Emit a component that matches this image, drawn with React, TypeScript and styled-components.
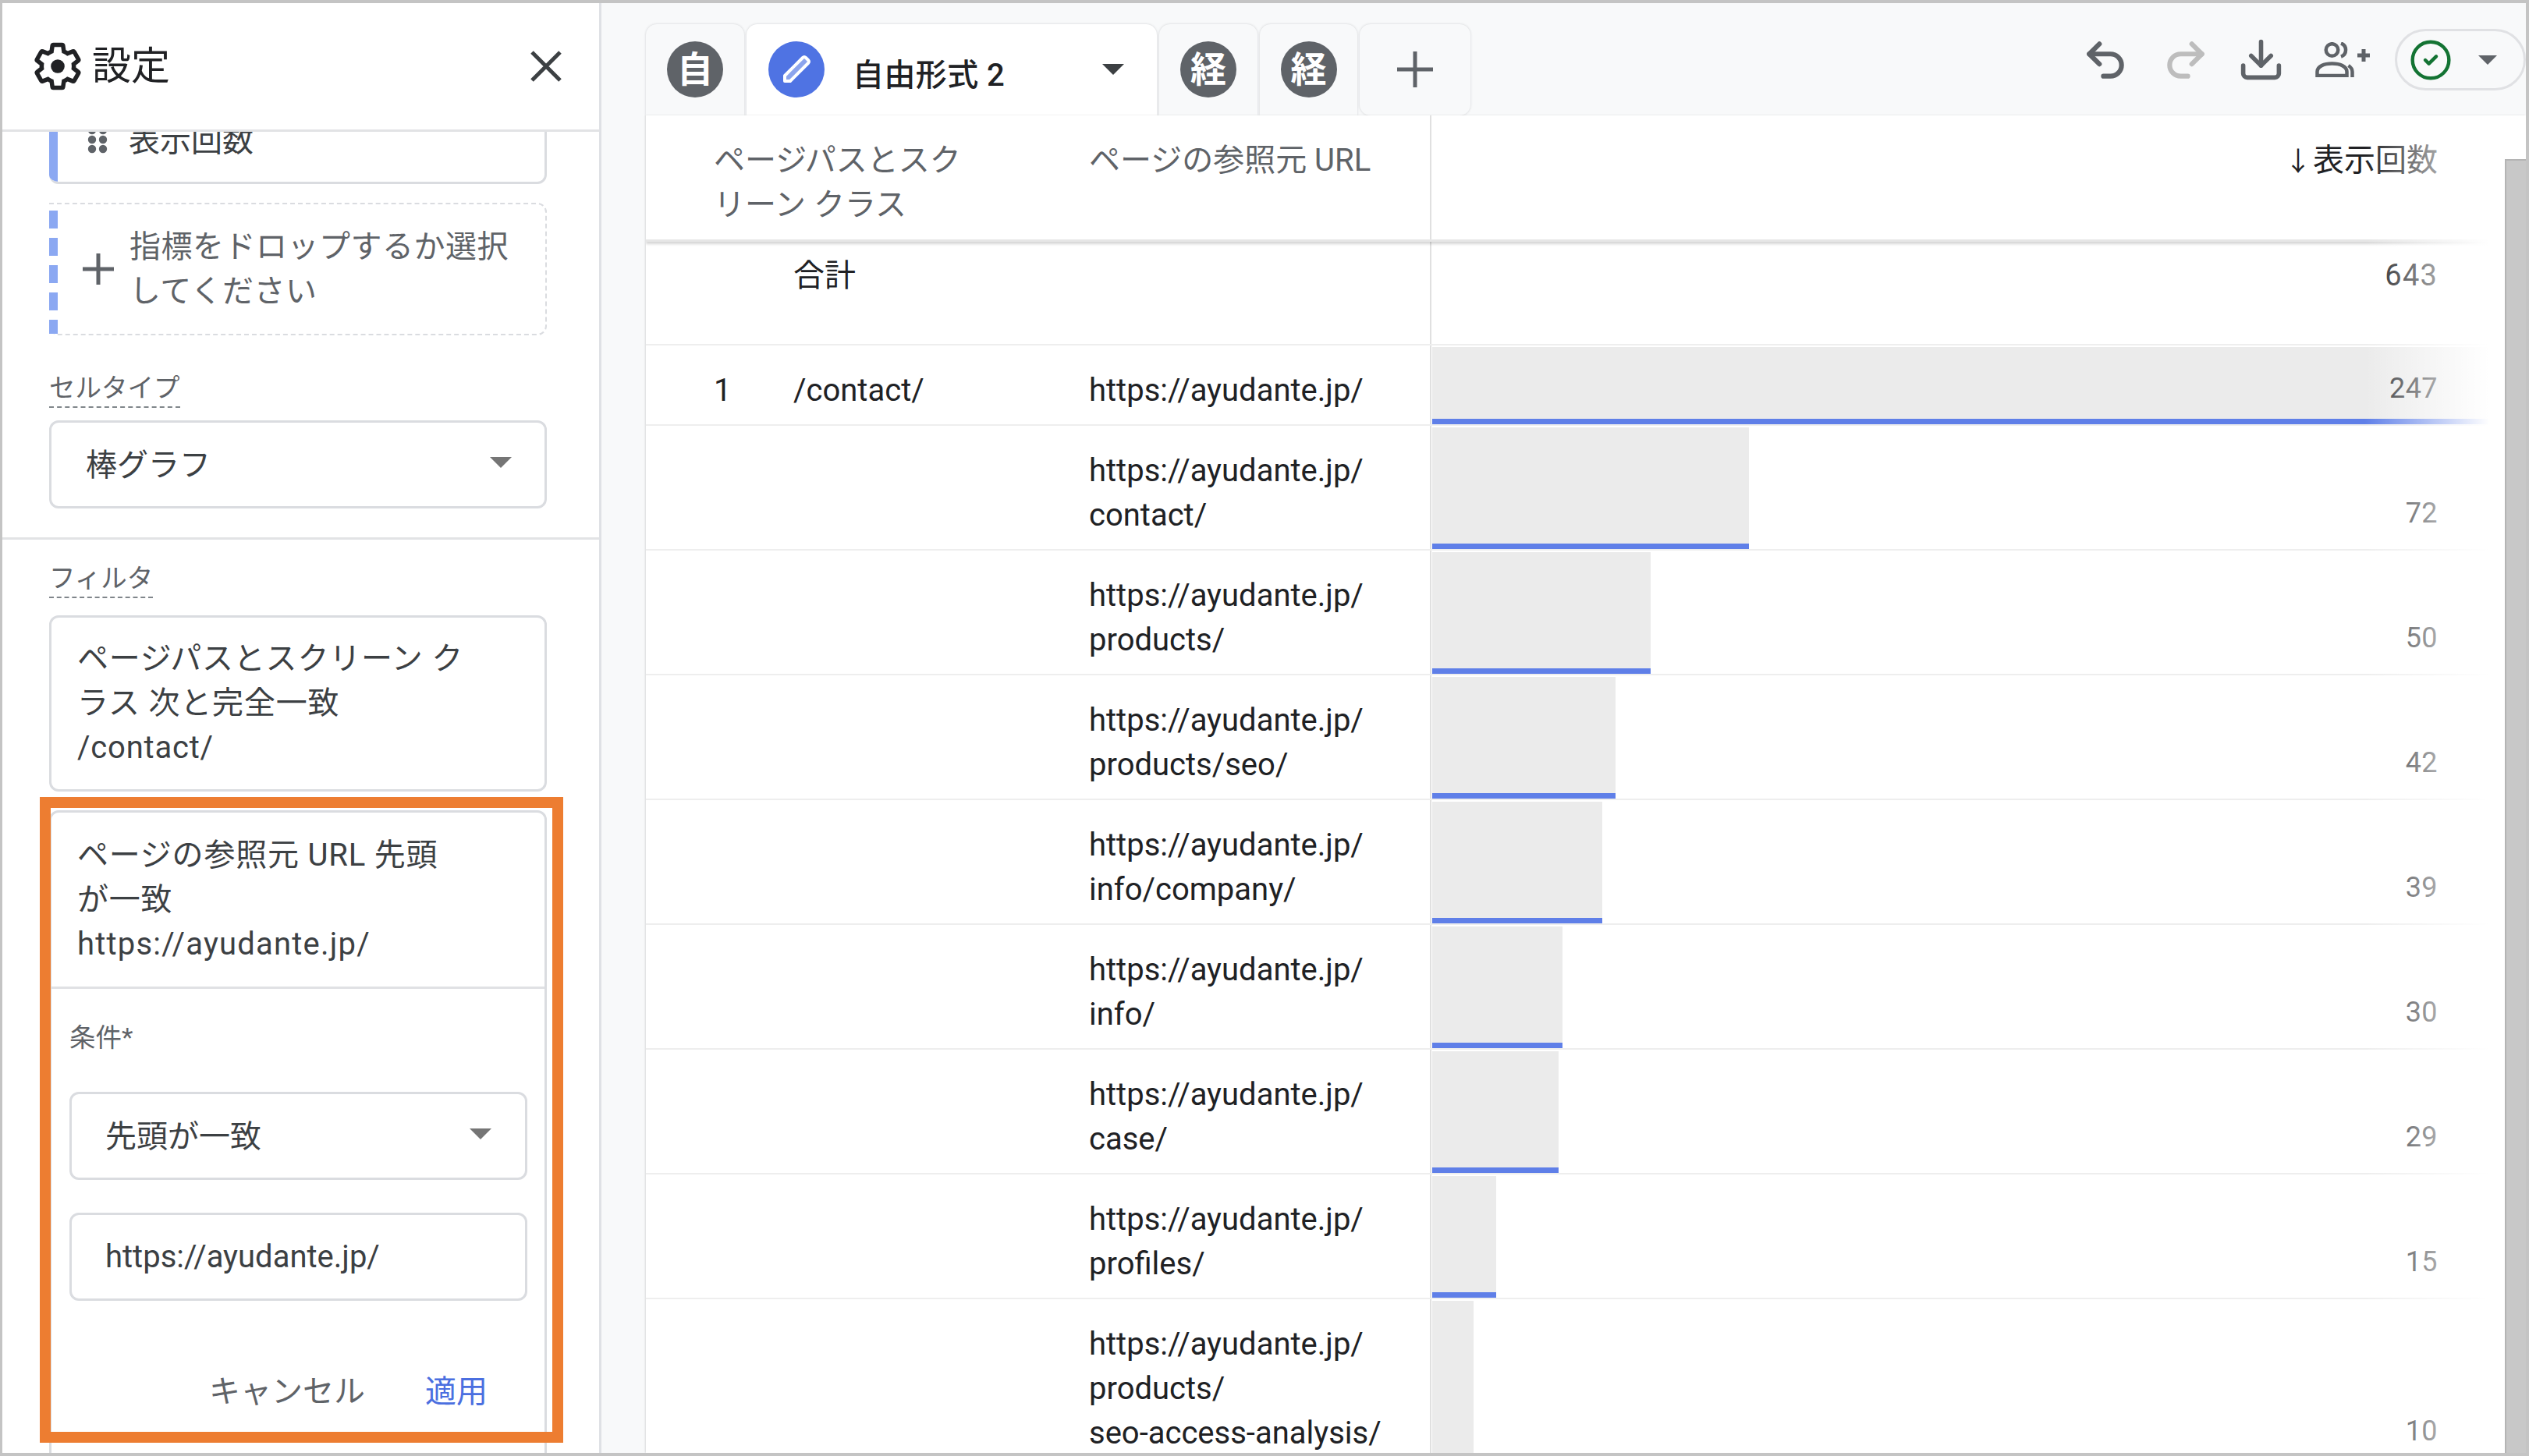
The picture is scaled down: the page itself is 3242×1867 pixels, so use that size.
import React from "react";
import styled, { createGlobalStyle } from "styled-components";
import { Undo2, Redo2, Download, CircleCheck } from "lucide-react";

const GlobalStyle = createGlobalStyle`
  html, body { margin: 0; padding: 0; background: #fff; }
  body { font-family: Roboto, "Noto Sans CJK JP", sans-serif; }
  * { box-sizing: border-box; }
`;

const Frame = styled.div`
  position: relative;
  width: 3242px;
  height: 1867px;
  border: solid #c4c4c4;
  border-width: 4px 4px 4px 3px;
  display: flex;
  overflow: hidden;
  background: #fff;
`;

/* ---------- sidebar ---------- */
const Sidebar = styled.aside`
  width: 768px;
  flex: none;
  border-right: 3px solid #dfe1e5;
  display: flex;
  flex-direction: column;
  overflow: hidden;
`;
const SideHeader = styled.header`
  position: relative;
  z-index: 1;
  flex: none;
  height: 165px;
  background: #fff;
  border-bottom: 3px solid #e2e3e5;
  display: flex;
  align-items: center;
  padding: 0 48px 0 38px;
`;
const Title = styled.h1`
  margin: 0 0 0 11px;
  flex: 1;
  font-size: 50px;
  font-weight: 400;
  line-height: 60px;
  color: #202124;
`;
const SideBody = styled.div`
  padding: 0 67px 0 60px;
  display: flex;
  flex-direction: column;
`;
const MetricCard = styled.div`
  margin-top: -32px;
  height: 99px;
  flex: none;
  display: flex;
  border: solid #dadce0;
  border-width: 3px 3px 3px 0;
  border-radius: 0 0 12px 12px;
  background: #fff;
  overflow: hidden;
`;
const BlueEdge = styled.span`
  width: 11px;
  flex: none;
  background: #8ba8f2;
`;
const DragDots = styled.svg`
  width: 26px;
  height: 60px;
  margin: -3px 0 0 38px;
  flex: none;
`;
const MetricName = styled.span`
  margin: 12px 0 0 27px;
  font-size: 40px;
  line-height: 57px;
  color: #3c4043;
`;
const DropZone = styled.div`
  margin-top: 24px;
  height: 170px;
  flex: none;
  display: flex;
  align-items: center;
  border: 2px dashed #dadce0;
  border-left: none;
  border-radius: 0 12px 12px 12px;
`;
const DashedEdge = styled.span`
  align-self: stretch;
  margin-top: 8px;
  width: 11px;
  flex: none;
  background: repeating-linear-gradient(to bottom, #8ba8f2 0 23px, transparent 23px 35px);
`;
const PlusGlyph = styled.svg`
  width: 40px;
  height: 40px;
  margin-left: 32px;
  flex: none;
`;
const DropText = styled.span`
  margin-left: 20px;
  width: 500px;
  font-size: 40px;
  line-height: 57px;
  letter-spacing: 0.5px;
  color: #5f6368;
`;
const FieldLabel = styled.span<{ $top: number }>`
  align-self: flex-start;
  margin-top: ${(p) => p.$top}px;
  font-size: 33.5px;
  line-height: 44px;
  padding-bottom: 1px;
  border-bottom: 2px dashed #80868b;
  color: #5f6368;
`;
const SelectBox = styled.div<{ $top: number; $left: number; $right: number }>`
  margin-top: ${(p) => p.$top}px;
  height: 113px;
  flex: none;
  display: flex;
  align-items: center;
  justify-content: space-between;
  padding: 0 ${(p) => p.$right}px 5px ${(p) => p.$left}px;
  border: 3px solid #dadce0;
  border-radius: 12px;
  font-size: 40px;
  color: #3c4043;
`;
const Caret = styled.span<{ $color?: string; $w?: number }>`
  display: block;
  width: 0;
  height: 0;
  flex: none;
  border-left: ${(p) => (p.$w ?? 28) / 2}px solid transparent;
  border-right: ${(p) => (p.$w ?? 28) / 2}px solid transparent;
  border-top: ${(p) => (p.$w ?? 28) / 2}px solid ${(p) => p.$color ?? "#757575"};
`;
const SideRule = styled.hr`
  margin: 37px -67px 0 -60px;
  height: 3px;
  flex: none;
  border: 0;
  background: #e2e3e5;
`;
const FilterCard = styled.div`
  margin-top: 22px;
  height: 226px;
  flex: none;
  padding: 24px 30px 0 33px;
  border: 3px solid #dadce0;
  border-radius: 12px;
  font-size: 40px;
  line-height: 57px;
  letter-spacing: 0.8px;
  color: #3c4043;
`;
const OpenCard = styled.div`
  margin-top: 24px;
  flex: none;
  border: 3px solid #dadce0;
  border-radius: 12px;
  padding-bottom: 60px;
`;
const OpenHead = styled.div`
  padding: 26px 30px 26px 33px;
  border-bottom: 3px solid #e0e1e4;
  font-size: 40px;
  line-height: 57px;
  letter-spacing: 0.8px;
  color: #3c4043;
`;
const OpenUrl = styled.span`
  letter-spacing: 1.2px;
`;
const OpenForm = styled.div`
  padding: 0 22px 0 23px;
  display: flex;
  flex-direction: column;
`;
const CondLabel = styled.span`
  margin-top: 41px;
  font-size: 33.5px;
  line-height: 44px;
  color: #5f6368;
`;
const InputBox = styled.div`
  margin-top: 42px;
  height: 113px;
  display: flex;
  align-items: center;
  padding-left: 43px;
  border: 3px solid #dadce0;
  border-radius: 12px;
  font-size: 40px;
  color: #3c4043;
`;
const Actions = styled.div`
  margin-top: 88px;
  padding-right: 51px;
  display: flex;
  justify-content: flex-end;
  gap: 77px;
  font-size: 40px;
  line-height: 57px;
`;
const ActionBtn = styled.span<{ $primary?: boolean }>`
  color: ${(p) => (p.$primary ? "#4b6fe0" : "#5f6368")};
`;
const Highlight = styled.div`
  position: absolute;
  left: 48px;
  top: 1018px;
  width: 671px;
  height: 828px;
  border: 14px solid #ed7d31;
  pointer-events: none;
`;

/* ---------- main ---------- */
const Main = styled.main`
  flex: 1;
  min-width: 0;
  display: flex;
  flex-direction: column;
  background: #f8f9fa;
`;
const TopBar = styled.div`
  flex: none;
  height: 144px;
  display: flex;
  align-items: flex-start;
  padding-left: 57px;
`;
const Tabs = styled.div`
  margin-top: 27px;
  display: flex;
  gap: 3px;
`;
const Tab = styled.div<{ $active?: boolean; $w: number; $plus?: boolean }>`
  width: ${(p) => p.$w}px;
  height: 117px;
  padding-top: 22px;
  display: flex;
  align-items: flex-start;
  justify-content: ${(p) => (p.$active ? "flex-start" : "center")};
  padding-left: ${(p) => (p.$active ? "28px" : "0")};
  padding-right: ${(p) => (p.$active ? "42px" : "0")};
  background: ${(p) => (p.$active ? "#fff" : "#f8f9fa")};
  border-radius: ${(p) => (p.$plus ? "14px" : "14px 14px 0 0")};
  box-shadow: 0 0 3px rgba(60, 64, 67, 0.22);
`;
const Avatar = styled.span<{ $bg: string }>`
  width: 72px;
  height: 72px;
  flex: none;
  border-radius: 50%;
  background: ${(p) => p.$bg};
  color: #fff;
  font-size: 46px;
  font-weight: 700;
  line-height: 72px;
  text-align: center;
  display: flex;
  align-items: center;
  justify-content: center;
`;
const TabTitle = styled.span`
  margin: 21px 0 0 36px;
  font-size: 40px;
  line-height: 46px;
  font-weight: 500;
  letter-spacing: 0.4px;
  color: #202124;
  flex: 1;
`;
const TabCaret = styled.span`
  display: flex;
  margin-top: 29px;
`;
const PlusTabGlyph = styled.svg`
  width: 46px;
  height: 46px;
  margin-top: 13px;
`;
const Toolbar = styled.div`
  margin-left: auto;
  padding-top: 33px;
  display: flex;
  align-items: center;
  gap: 35px;
  color: #5f6368;
`;
const UndoIcon = styled(Undo2)`
  margin-right: 6px;
`;
const PersonGlyph = styled.svg`
  width: 70px;
  height: 45px;
  margin-left: 4px;
`;
const StatusPill = styled.div`
  width: 168px;
  height: 79px;
  margin-left: -3px;
  border: 3px solid #e0e1e4;
  border-radius: 40px;
  display: flex;
  align-items: center;
  padding-left: 15px;
  gap: 33px;
  color: #137333;
`;

const TableArea = styled.div`
  flex: 1;
  min-height: 0;
  margin-left: 57px;
  background: #fff;
  display: flex;
  box-shadow: -1px 0 2px rgba(0, 0, 0, 0.12);
`;
const Table = styled.div`
  position: relative;
  flex: 1;
  min-width: 0;
  overflow: hidden;
`;
const EdgeFade = styled.div`
  position: absolute;
  top: 0;
  bottom: 0;
  right: 0;
  width: 180px;
  background: linear-gradient(to right, rgba(255, 255, 255, 0), #fff 160px);
  pointer-events: none;
`;
const Scrollbar = styled.div`
  width: 27px;
  flex: none;
  margin-top: 56px;
  background: #c8c8c8;
  border: solid #b4b4b4;
  border-width: 2px 0 0 2px;
`;
const GridRow = styled.div`
  display: grid;
  grid-template-columns: 189px 379px 439px 1fr;
`;
const HeadRow = styled(GridRow)`
  height: 162px;
  border-bottom: 3px solid #e6e6e6;
  box-shadow: 0 3px 3px rgba(0, 0, 0, 0.16);
  font-size: 40px;
  line-height: 57px;
  color: #5f6368;
  position: relative;
`;
const HeadFirst = styled.div`
  grid-column: 1 / span 2;
  padding: 29px 0 0 87px;
`;
const HeadUrl = styled.div`
  padding-top: 29px;
  border-right: 2px solid #e0e0e0;
  white-space: nowrap;
`;
const HeadMetric = styled.div`
  padding: 29px 86px 0 0;
  text-align: right;
  color: #202124;
`;
const DownArrow = styled.span`
  font-size: 34px;
  margin-right: 2px;
`;
const Row = styled(GridRow)`
  border-bottom: 2px solid #eeeeee;
  font-size: 40px;
  line-height: 57px;
  color: #202124;
`;
const Cell = styled.div<{ $indent?: number }>`
  padding: 29px 0 15px ${(p) => p.$indent ?? 0}px;
`;
const UrlCell = styled(Cell)`
  border-right: 2px solid #e0e0e0;
`;
const MetricCell = styled.div`
  display: grid;
  grid-template-columns: 1fr;
  min-height: 0;
`;
const Bar = styled.div`
  grid-area: 1 / 1;
  margin: 2px 0 0 1px;
  background: #ebebeb;
  display: flex;
  align-items: flex-end;
`;
const BarLine = styled.div`
  height: 7px;
  width: 100%;
  background: #5f7fe8;
`;
const Value = styled.div<{ $total?: boolean }>`
  grid-area: 1 / 1;
  align-self: ${(p) => (p.$total ? "start" : "end")};
  justify-self: end;
  padding: ${(p) => (p.$total ? "15px 86px 0 0" : "0 86px 17px 0")};
  font-size: ${(p) => (p.$total ? 38 : 36)}px;
  line-height: 57px;
  letter-spacing: ${(p) => (p.$total ? 1.2 : 0.4)}px;
  color: ${(p) => (p.$total ? "#202124" : "#303236")};
`;
const TotalRow = styled(Row)`
  height: 133px;
`;
const TotalLabel = styled.div`
  grid-column: 1 / span 2;
  padding: 15px 0 0 189px;
`;
const TotalUrl = styled.div`
  border-right: 2px solid #e0e0e0;
`;

const rows = [
  { rank: "1", path: "/contact/", url: ["https://ayudante.jp/"], v: 247, w: 1360 },
  { url: ["https://ayudante.jp/", "contact/"], v: 72, w: 406 },
  { url: ["https://ayudante.jp/", "products/"], v: 50, w: 280 },
  { url: ["https://ayudante.jp/", "products/seo/"], v: 42, w: 235 },
  { url: ["https://ayudante.jp/", "info/company/"], v: 39, w: 218 },
  { url: ["https://ayudante.jp/", "info/"], v: 30, w: 167 },
  { url: ["https://ayudante.jp/", "case/"], v: 29, w: 162 },
  { url: ["https://ayudante.jp/", "profiles/"], v: 15, w: 82 },
  { url: ["https://ayudante.jp/", "products/", "seo-access-analysis/"], v: 10, w: 53, noLine: true },
];

const GearIcon = () => (
  <svg width="66" height="66" viewBox="0 0 24 24" fill="none" style={{ flex: "none" }}>
    <path
      d="M19.43 12.98c.04-.32.07-.64.07-.98 0-.34-.03-.66-.07-.98l2.11-1.65c.19-.15.24-.42.12-.64l-2-3.46c-.12-.22-.39-.3-.61-.22l-2.49 1c-.52-.4-1.08-.73-1.69-.98l-.38-2.65C14.46 2.18 14.25 2 14 2h-4c-.25 0-.46.18-.49.42l-.38 2.65c-.61.25-1.17.59-1.69.98l-2.49-1c-.23-.09-.49 0-.61.22l-2 3.46c-.13.22-.07.49.12.64l2.11 1.65c-.04.32-.07.65-.07.98 0 .33.03.66.07.98l-2.11 1.65c-.19.15-.24.42-.12.64l2 3.46c.12.22.39.3.61.22l2.49-1c.52.4 1.08.73 1.69.98l.38 2.65c.03.24.24.42.49.42h4c.25 0 .46-.18.49-.42l.38-2.65c.61-.25 1.17-.59 1.69-.98l2.49 1c.23.09.49 0 .61-.22l2-3.46c.12-.22.07-.49-.12-.64l-2.11-1.65z"
      stroke="#202124"
      strokeWidth="2"
    />
    <circle cx="12" cy="12" r="3.2" fill="#202124" />
  </svg>
);

const CloseIcon = () => (
  <svg width="40" height="40" viewBox="0 0 40 40" style={{ flex: "none" }}>
    <path d="M2 2 L38 38 M38 2 L2 38" stroke="#3c4043" strokeWidth="5" fill="none" />
  </svg>
);

const PencilIcon = () => (
  <svg width="72" height="72" viewBox="0 0 72 72" fill="none">
    <path
      d="M21 51 v-7 L44 21 q2-2 4 0 l3 3 q2 2 0 4 L28 51 z"
      stroke="#fff"
      strokeWidth="4"
      strokeLinejoin="round"
      fill="rgba(255,255,255,.35)"
    />
  </svg>
);

export default function App() {
  return (
    <>
      <GlobalStyle />
      <Frame>
        <Sidebar>
          <SideHeader>
            <GearIcon />
            <Title>設定</Title>
            <CloseIcon />
          </SideHeader>
          <SideBody>
            <MetricCard>
              <BlueEdge />
              <DragDots viewBox="0 0 26 60">
                {[30, 42, 54].map((y) =>
                  [6, 20].map((x) => <circle key={`${x}-${y}`} cx={x} cy={y} r="5.2" fill="#5f6368" />)
                )}
              </DragDots>
              <MetricName>表示回数</MetricName>
            </MetricCard>
            <DropZone>
              <DashedEdge />
              <PlusGlyph viewBox="0 0 40 40">
                <path d="M20 0 V40 M0 20 H40" stroke="#5f6368" strokeWidth="5" fill="none" />
              </PlusGlyph>
              <DropText>指標をドロップするか選択してください</DropText>
            </DropZone>
            <FieldLabel $top={46}>セルタイプ</FieldLabel>
            <SelectBox $top={16} $left={44} $right={42}>
              棒グラフ
              <Caret />
            </SelectBox>
            <SideRule />
            <FieldLabel $top={28}>フィルタ</FieldLabel>
            <FilterCard>
              ページパスとスクリーン ク
              <br />
              ラス 次と完全一致
              <br />
              /contact/
            </FilterCard>
            <OpenCard>
              <OpenHead>
                ページの参照元 URL 先頭
                <br />
                が一致
                <br />
                <OpenUrl>https://ayudante.jp/</OpenUrl>
              </OpenHead>
              <OpenForm>
                <CondLabel>条件*</CondLabel>
                <SelectBox $top={47} $left={43} $right={43}>
                  先頭が一致
                  <Caret />
                </SelectBox>
                <InputBox>https://ayudante.jp/</InputBox>
                <Actions>
                  <ActionBtn>キャンセル</ActionBtn>
                  <ActionBtn $primary>適用</ActionBtn>
                </Actions>
              </OpenForm>
            </OpenCard>
          </SideBody>
        </Sidebar>
        <Main>
          <TopBar>
            <Tabs>
              <Tab $w={126}>
                <Avatar $bg="#5f6368">自</Avatar>
              </Tab>
              <Tab $w={526} $active>
                <Avatar $bg="#4f73e3">
                  <PencilIcon />
                </Avatar>
                <TabTitle>自由形式 2</TabTitle>
                <TabCaret>
                  <Caret $color="#3c4043" />
                </TabCaret>
              </Tab>
              <Tab $w={126}>
                <Avatar $bg="#5f6368">経</Avatar>
              </Tab>
              <Tab $w={125}>
                <Avatar $bg="#5f6368">経</Avatar>
              </Tab>
              <Tab $w={142} $plus>
                <PlusTabGlyph viewBox="0 0 46 46">
                  <path d="M23 0 V46 M0 23 H46" stroke="#5f6368" strokeWidth="5" fill="none" />
                </PlusTabGlyph>
              </Tab>
            </Tabs>
            <Toolbar>
              <UndoIcon size={62} strokeWidth={2.4} />
              <Redo2 size={62} strokeWidth={2.4} color="#bdbdbd" />
              <Download size={61} strokeWidth={2.2} />
              <PersonGlyph viewBox="0 0 70 45" fill="none" stroke="#5f6368" strokeWidth="4.5">
                <circle cx="21.5" cy="10" r="7.8" />
                <path d="M33 1.5 a9 9 0 0 1 0 17" />
                <path d="M2.5 43 v-5 c0-7 9-10.5 19-10.5 s19 3.5 19 10.5 v5 z" />
                <path d="M47.5 45 v-7 c0-3-2-6-5-8" />
                <path d="M62 9 v16 M54 17 h16" strokeWidth="5" />
              </PersonGlyph>
              <StatusPill>
                <CircleCheck size={56} strokeWidth={1.9} />
                <Caret $color="#5f6368" $w={24} />
              </StatusPill>
            </Toolbar>
          </TopBar>
          <TableArea>
            <Table>
              <HeadRow>
                <HeadFirst>
                  ページパスとスク
                  <br />
                  リーン クラス
                </HeadFirst>
                <HeadUrl>ページの参照元 URL</HeadUrl>
                <HeadMetric>
                  <DownArrow>↓</DownArrow>表示回数
                </HeadMetric>
              </HeadRow>
              <TotalRow>
                <TotalLabel>合計</TotalLabel>
                <TotalUrl />
                <MetricCell>
                  <Value $total>643</Value>
                </MetricCell>
              </TotalRow>
              {rows.map((r) => (
                <Row key={r.url.join("") + r.v}>
                  <Cell $indent={87}>{r.rank}</Cell>
                  <Cell>{r.path}</Cell>
                  <UrlCell>
                    {r.url.map((line) => (
                      <div key={line}>{line}</div>
                    ))}
                  </UrlCell>
                  <MetricCell>
                    <Bar style={{ width: r.w }}>{!r.noLine && <BarLine />}</Bar>
                    <Value>{r.v}</Value>
                  </MetricCell>
                </Row>
              ))}
              <EdgeFade />
            </Table>
            <Scrollbar />
          </TableArea>
        </Main>
        <Highlight />
      </Frame>
    </>
  );
}
